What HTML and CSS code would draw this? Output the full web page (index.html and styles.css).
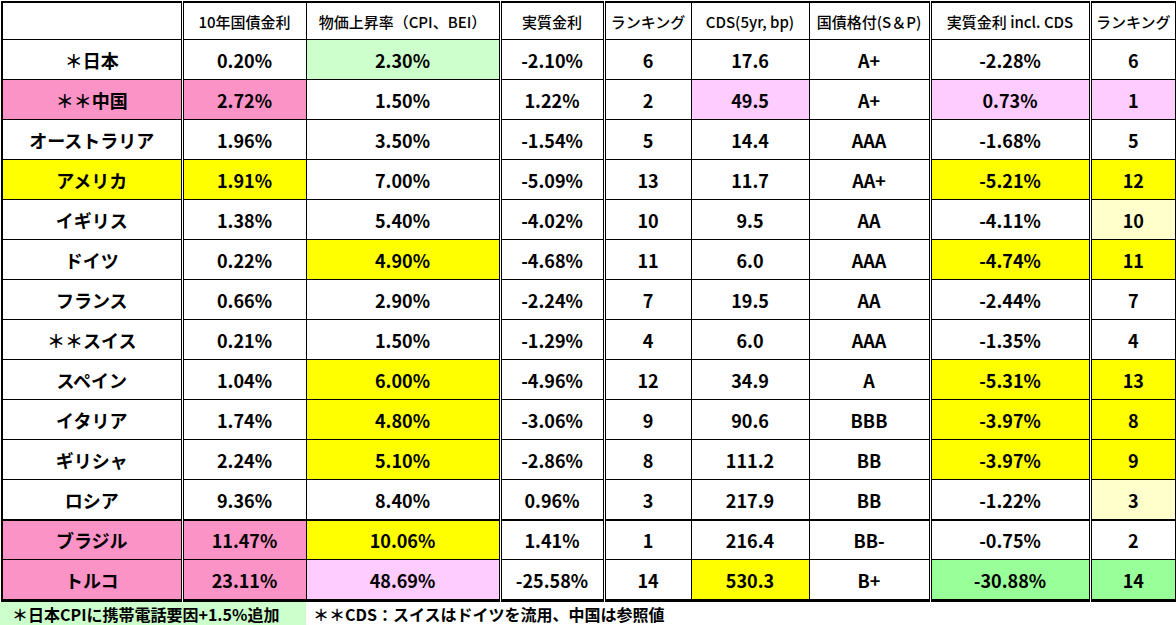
FILE: index.html
```html
<!DOCTYPE html>
<html lang="ja">
<head>
<meta charset="utf-8">
<title>実質金利比較</title>
<link rel="stylesheet" href="styles.css">
</head>
<body>
<table class="grid">
  <colgroup>
    <col class="c0"><col class="c1"><col class="c2"><col class="c3"><col class="c4"><col class="c5"><col class="c6"><col class="c7"><col class="c8">
  </colgroup>
  <thead>
    <tr class="head">
      <th></th>
      <th class="dl">10年国債金利</th>
      <th>物価上昇率（CPI、BEI）</th>
      <th class="dl">実質金利</th>
      <th class="dl">ランキング</th>
      <th>CDS(5yr, bp)</th>
      <th>国債格付(S＆P)</th>
      <th class="dl">実質金利 incl. CDS</th>
      <th class="dl">ランキング</th>
    </tr>
  </thead>
  <tbody>
    <tr><td class="name">＊日本</td><td class="dl">0.20%</td><td class="lgreen">2.30%</td><td class="dl">-2.10%</td><td class="dl">6</td><td>17.6</td><td>A+</td><td class="dl">-2.28%</td><td class="dl">6</td></tr>
    <tr><td class="name pink">＊＊中国</td><td class="dl pink">2.72%</td><td>1.50%</td><td class="dl">1.22%</td><td class="dl">2</td><td class="lpink">49.5</td><td>A+</td><td class="dl lpink">0.73%</td><td class="dl lpink">1</td></tr>
    <tr><td class="name">オーストラリア</td><td class="dl">1.96%</td><td>3.50%</td><td class="dl">-1.54%</td><td class="dl">5</td><td>14.4</td><td>AAA</td><td class="dl">-1.68%</td><td class="dl">5</td></tr>
    <tr><td class="name yellow">アメリカ</td><td class="dl yellow">1.91%</td><td>7.00%</td><td class="dl">-5.09%</td><td class="dl">13</td><td>11.7</td><td>AA+</td><td class="dl yellow">-5.21%</td><td class="dl yellow">12</td></tr>
    <tr><td class="name">イギリス</td><td class="dl">1.38%</td><td>5.40%</td><td class="dl">-4.02%</td><td class="dl">10</td><td>9.5</td><td>AA</td><td class="dl">-4.11%</td><td class="dl lyellow">10</td></tr>
    <tr><td class="name">ドイツ</td><td class="dl">0.22%</td><td class="yellow">4.90%</td><td class="dl">-4.68%</td><td class="dl">11</td><td>6.0</td><td>AAA</td><td class="dl yellow">-4.74%</td><td class="dl yellow">11</td></tr>
    <tr><td class="name">フランス</td><td class="dl">0.66%</td><td>2.90%</td><td class="dl">-2.24%</td><td class="dl">7</td><td>19.5</td><td>AA</td><td class="dl">-2.44%</td><td class="dl">7</td></tr>
    <tr><td class="name">＊＊スイス</td><td class="dl">0.21%</td><td>1.50%</td><td class="dl">-1.29%</td><td class="dl">4</td><td>6.0</td><td>AAA</td><td class="dl">-1.35%</td><td class="dl">4</td></tr>
    <tr><td class="name">スペイン</td><td class="dl">1.04%</td><td class="yellow">6.00%</td><td class="dl">-4.96%</td><td class="dl">12</td><td>34.9</td><td>A</td><td class="dl yellow">-5.31%</td><td class="dl yellow">13</td></tr>
    <tr><td class="name">イタリア</td><td class="dl">1.74%</td><td class="yellow">4.80%</td><td class="dl">-3.06%</td><td class="dl">9</td><td>90.6</td><td>BBB</td><td class="dl yellow">-3.97%</td><td class="dl yellow">8</td></tr>
    <tr><td class="name">ギリシャ</td><td class="dl">2.24%</td><td class="yellow">5.10%</td><td class="dl">-2.86%</td><td class="dl">8</td><td>111.2</td><td>BB</td><td class="dl yellow">-3.97%</td><td class="dl yellow">9</td></tr>
    <tr><td class="name">ロシア</td><td class="dl">9.36%</td><td>8.40%</td><td class="dl">0.96%</td><td class="dl">3</td><td>217.9</td><td>BB</td><td class="dl">-1.22%</td><td class="dl lyellow">3</td></tr>
    <tr class="thick"><td class="name pink">ブラジル</td><td class="dl pink">11.47%</td><td class="yellow">10.06%</td><td class="dl">1.41%</td><td class="dl">1</td><td>216.4</td><td>BB-</td><td class="dl">-0.75%</td><td class="dl">2</td></tr>
    <tr class="last"><td class="name pink">トルコ</td><td class="dl pink">23.11%</td><td class="lpink">48.69%</td><td class="dl">-25.58%</td><td class="dl">14</td><td class="yellow">530.3</td><td>B+</td><td class="dl green">-30.88%</td><td class="dl green">14</td></tr>
  </tbody>
</table>
<div class="notes">
  <div class="note note-green">＊日本CPIに携帯電話要因+1.5%追加</div>
  <div class="note">＊＊CDS：スイスはドイツを流用、中国は参照値</div>
</div>
</body>
</html>
```
FILE: styles.css
```css
html, body {
  margin: 0;
  padding: 0;
  background: #ffffff;
}
body {
  font-family: "Noto Sans CJK JP", "Noto Sans", sans-serif;
  color: #000;
  width: 1176px;
  height: 625px;
  overflow: hidden;
}
.grid {
  border-collapse: collapse;
  table-layout: fixed;
  width: 1175px;
  margin: 1px 0 0 1px;
  border: 2px solid #000;
}
.c0 { width: 180px; }
.c1 { width: 124px; }
.c2 { width: 194px; }
.c3 { width: 104px; }
.c4 { width: 87px; }
.c5 { width: 118px; }
.c6 { width: 121px; }
.c7 { width: 160px; }
.c8 { width: 86px; }
.grid th, .grid td {
  border: 1px solid #000;
  padding: 0;
  text-align: center;
  vertical-align: middle;
  white-space: nowrap;
  overflow: hidden;
}
.grid th {
  height: 36px;
  font-size: 15px;
  font-weight: 500;
}
.grid td {
  height: 39px;
  font-size: 18px;
  font-weight: 700;
}
.grid td.name {
  font-size: 18px;
}
.grid .dl {
  border-left: 3px double #000;
}
.grid tr.thick td {
  height: 38px;
  border-top: 2px solid #000;
}
.grid tr.last td {
  border-bottom: 3px solid #000;
}
.pink { background: #fb93c6; }
.lpink { background: #ffccff; }
.yellow { background: #ffff00; }
.lyellow { background: #ffffcc; }
.lgreen { background: #ccffcc; }
.green { background: #99ff99; }
.notes {
  display: flex;
  height: 24px;
}
.note {
  font-size: 16px;
  font-weight: 700;
  line-height: 24px;
  white-space: nowrap;
}
.note-green {
  width: 294px;
  padding-left: 12px;
  background: #ccffcc;
  margin-right: 7px;
}
```
